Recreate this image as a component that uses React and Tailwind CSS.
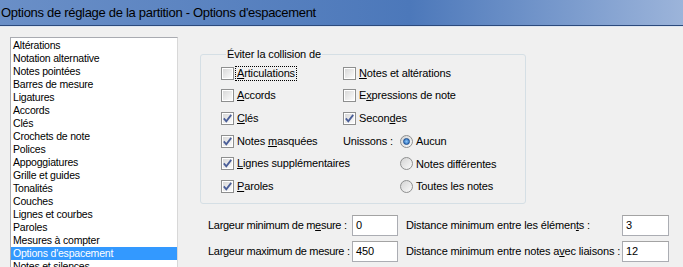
const ITEMS = [
  "Altérations", "Notation alternative", "Notes pointées", "Barres de mesure", "Ligatures",
  "Accords", "Clés", "Crochets de note", "Polices", "Appoggiatures", "Grille et guides",
  "Tonalités", "Couches", "Lignes et courbes", "Paroles", "Mesures à compter",
  "Options d'espacement", "Notes et silences", "Portées",
];

function Check({ checked }) {
  return (
    <span className="flex h-[13px] w-[13px] shrink-0 border border-[#8e8f8f] bg-white p-px">
      <span className="flex flex-1 items-center justify-center bg-linear-to-br from-[#d9d9d9] to-[#fbfbfb]">
        {checked && (
          <svg width="9" height="9" viewBox="0 0 9 9">
            <path d="M0.8 4.4 L3.3 7.4 L8.2 0.9" fill="none" stroke="#4a5e98" strokeWidth="1.8" />
          </svg>
        )}
      </span>
    </span>
  );
}

function Radio({ on }) {
  return (
    <span className="flex h-[13px] w-[13px] shrink-0 items-center justify-center rounded-full border border-[#8e8f8f] bg-linear-to-br from-[#d4d4d4] to-[#fafafa]">
      {on && <span className="h-[7px] w-[7px] rounded-full border border-[#1d4f8f] bg-radial from-[#8cc4f5] to-[#1563b8]" />}
    </span>
  );
}

function CheckRow({ checked, focus, children }) {
  return (
    <div className="flex h-[22.67px] items-center gap-px">
      <Check checked={checked} />
      <span className={`px-px leading-[13px] ${focus ? "border border-dotted border-black" : "border border-transparent"}`}>{children}</span>
    </div>
  );
}

function RadioRow({ on, children }) {
  return (
    <div className="flex h-[22.67px] items-center gap-[3px]">
      <Radio on={on} />
      <span>{children}</span>
    </div>
  );
}

function Field({ value }) {
  return (
    <div className="flex h-[21px] items-center border border-[#abadb3] border-t-[#a3a3a3] bg-white pl-[3px]">{value}</div>
  );
}

export default function App() {
  return (
    <div className="h-[267px] w-[683px] overflow-hidden whitespace-nowrap bg-[#f0f0f0] font-['Liberation_Sans',Arial,sans-serif] text-[11px] tracking-[-0.15px] text-black">
      <div className="flex h-[25px] items-center bg-linear-to-r from-[#6a8fc7] via-[#4c78ba] via-60% to-[#9cb4da] pl-px text-[13px] tracking-[-0.3px]">
        Options de réglage de la partition - Options d'espacement
      </div>
      <div className="h-px bg-[#2c4a7c]" />
      <div className="h-px bg-[#dfe6f0]" />

      <div className="flex pl-[10px] pt-[10px]">
        <div className="h-[240px] w-[168px] shrink-0 overflow-hidden border border-[#a9abb1] border-r-[#d8d8d8] bg-white pt-px">
          {ITEMS.map((s) => (
            <div key={s}
              className={`h-[13px] pl-[2px] text-[10.5px] tracking-[-0.2px] leading-[13px] ${s === "Options d'espacement" ? "bg-[#3399ff] text-white" : ""}`}>
              {s}
            </div>
          ))}
        </div>

        <div className="ml-[22px] flex flex-col">
          <fieldset className="mt-[10px] h-[157px] w-[326px] rounded-[3px] border border-[#d5dfe5] pl-[20px] pt-[1px]">
            <legend className="ml-[5px] px-px leading-[14px]">Éviter la collision de</legend>
            <div className="flex">
              <div className="w-[122px]">
                <CheckRow focus><u>A</u>rticulations</CheckRow>
                <CheckRow><u>A</u>ccords</CheckRow>
                <CheckRow checked><u>C</u>lés</CheckRow>
                <CheckRow checked>Notes <u>m</u>asquées</CheckRow>
                <CheckRow checked><u>L</u>ignes supplémentaires</CheckRow>
                <CheckRow checked><u>P</u>aroles</CheckRow>
              </div>
              <div>
                <CheckRow><u>N</u>otes et altérations</CheckRow>
                <CheckRow>E<u>x</u>pressions de note</CheckRow>
                <CheckRow checked>Secon<u>d</u>es</CheckRow>
                <div className="flex">
                  <div className="flex h-[22.67px] w-[57px] items-center">Unissons :</div>
                  <div>
                    <RadioRow on>Aucun</RadioRow>
                    <RadioRow>Notes différentes</RadioRow>
                    <RadioRow>Toutes les notes</RadioRow>
                  </div>
                </div>
              </div>
            </div>
          </fieldset>

          <div className="mt-[11px] flex flex-col gap-[5px]">
            <div className="flex items-center">
              <span className="w-[152px] shrink-0 pl-[8px] tracking-[-0.3px]">Largeur minimum de m<u>e</u>sure :</span>
              <div className="w-[46px] shrink-0"><Field value="0" /></div>
              <span className="ml-[8px] w-[216px] shrink-0">Distance minimum entre les élémen<u>t</u>s :</span>
              <div className="w-[47px] shrink-0"><Field value="3" /></div>
            </div>
            <div className="flex items-center">
              <span className="w-[152px] shrink-0 pl-[8px] tracking-[-0.3px]">Largeur maximum de mesure :</span>
              <div className="w-[46px] shrink-0"><Field value="450" /></div>
              <span className="ml-[8px] w-[216px] shrink-0">Distance minimum entre notes a<u>v</u>ec liaisons :</span>
              <div className="w-[47px] shrink-0"><Field value="12" /></div>
            </div>
          </div>
        </div>
      </div>
    </div>
  );
}
